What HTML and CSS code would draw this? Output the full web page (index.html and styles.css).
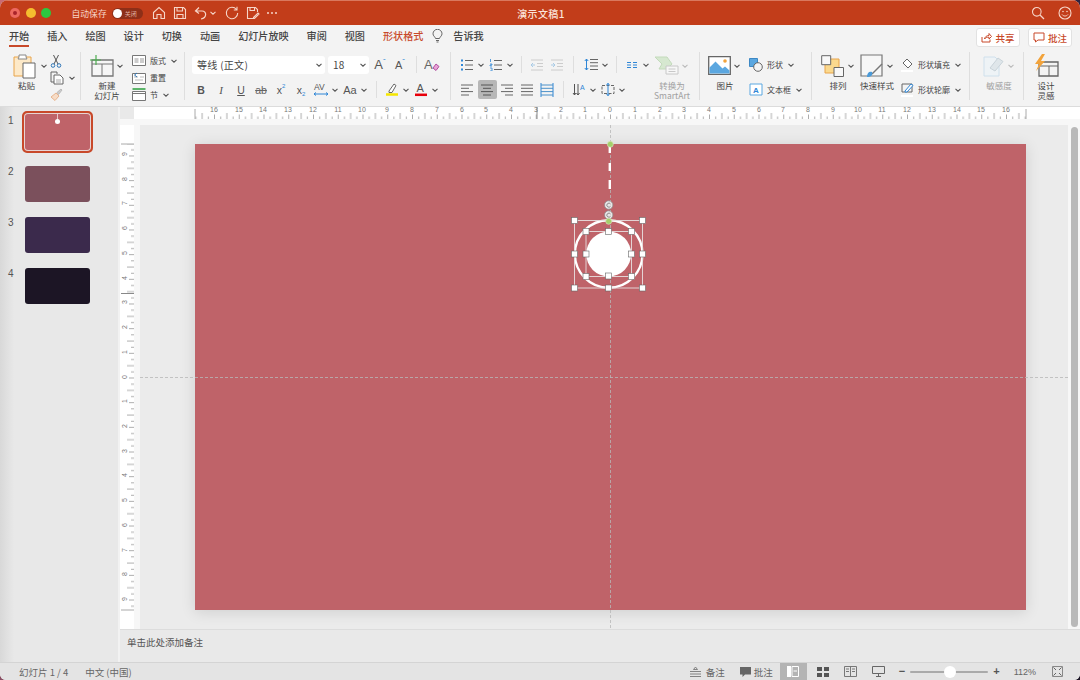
FILE: index.html
```html
<!DOCTYPE html>
<html lang="zh-CN">
<head>
    <meta charset="UTF-8">
    <title>演示文稿1</title>
    <link rel="stylesheet" href="styles.css">
</head>
<body>
<svg class="defs" width="0" height="0">
    <symbol id="chev" viewBox="0 0 8 8"><path d="M1.5 2.8 4 5.2 6.5 2.8" fill="none" stroke="#555" stroke-width="1.1"/></symbol>
    <symbol id="chevg" viewBox="0 0 8 8"><path d="M1.5 2.8 4 5.2 6.5 2.8" fill="none" stroke="#bbb" stroke-width="1.1"/></symbol>
</svg>
<div class="window">
    <!-- 타이틀바 -->
    <div class="titlebar">
        <div class="tb_left">
            <span class="light red"></span><span class="light yellow"></span><span class="light green"></span>
            <span class="autosave">自动保存</span>
            <span class="toggle"><i></i><em>关闭</em></span>
            <svg class="qa" width="14" height="14" viewBox="0 0 14 14"><path d="M1.5 6.5 7 1.5l5.500 5v6H9V8.500H5v4H1.500z" fill="none" stroke="#f6d5c8" stroke-width="1.100"/></svg>
            <svg class="qa" width="14" height="14" viewBox="0 0 14 14"><path d="M1.500 1.500h9l2 2v9h-11zM4 1.500v3.500h5.500V1.500M4 12.500V8.500h6v4" fill="none" stroke="#f6d5c8" stroke-width="1.100"/></svg>
            <svg class="qa undo" width="14" height="14" viewBox="0 0 14 14"><path d="M5 1.500 1.500 5 5 7.500M1.500 5H8c5 0 5 7-1 8" fill="none" stroke="#f6d5c8" stroke-width="1.200"/></svg>
            <svg class="qa_c" width="8" height="8" viewBox="0 0 8 8"><path d="M1.500 2.800 4 5.200 6.500 2.800" fill="none" stroke="#f6d5c8" stroke-width="1.100"/></svg>
            <svg class="qa" width="14" height="14" viewBox="0 0 14 14"><path d="M11.500 3.500A5.700 5.700 0 1 0 12.700 7M12 .8v3.200H8.800" fill="none" stroke="#f6d5c8" stroke-width="1.100"/></svg>
            <svg class="qa" width="14" height="14" viewBox="0 0 14 14"><path d="M8 12.500H1.500v-11h8l2 2V6M4 1.500v3h4.500v-3M7.500 11.500 12 7l1 1-4.500 4.500H7.500z" fill="none" stroke="#f6d5c8" stroke-width="1.100"/></svg>
            <span class="dots"><i></i><i></i><i></i></span>
        </div>
        <div class="doc_title">演示文稿1</div>
        <div class="tb_right">
            <svg width="14" height="14" viewBox="0 0 14 14"><circle cx="5.800" cy="5.800" r="4.300" fill="none" stroke="#f6d5c8" stroke-width="1.100"/><path d="M9 9l4 4" stroke="#f6d5c8" stroke-width="1.200"/></svg>
            <svg width="14" height="14" viewBox="0 0 14 14"><circle cx="7" cy="7" r="6" fill="none" stroke="#f6d5c8" stroke-width="1.100"/><circle cx="5" cy="5.500" r=".8" fill="#f6d5c8"/><circle cx="9" cy="5.500" r=".8" fill="#f6d5c8"/><path d="M4 8.500c1.500 2 4.500 2 6 0" fill="none" stroke="#f6d5c8"/></svg>
        </div>
    </div>

    <!-- 탭 -->
    <div class="tabs">
        <ul class="tablist">
            <li class="on">开始</li><li>插入</li><li>绘图</li><li>设计</li><li>切换</li><li>动画</li><li>幻灯片放映</li><li>审阅</li><li>视图</li><li class="shape">形状格式</li>
            <li class="tell">
                <svg width="11" height="14" viewBox="0 0 11 14"><path d="M3.500 9.500C3 7.500 1 7 1 4.800a4.500 4.500 0 0 1 9 0C10 7 8 7.500 7.500 9.500zM4 11.500h3M4.500 13h2" fill="none" stroke="#666"/></svg>
                告诉我
            </li>
        </ul>
        <div class="tab_btns">
            <a class="tbtn"><svg width="11" height="11" viewBox="0 0 11 11"><path d="M1 5v5h8V7.500M3.500 7c.5-2.500 2.500-3.500 4.500-3.500V1.500L10.500 4.500 8 7V5.200C6 5.200 4.500 5.500 3.500 7z" fill="none" stroke="#c8492a"/></svg>共享</a>
            <a class="tbtn"><svg width="12" height="11" viewBox="0 0 12 11"><path d="M1 1h10v7H5L2.500 10V8H1z" fill="none" stroke="#c8492a"/></svg>批注</a>
        </div>
    </div>

    <!-- 리본 -->
    <div class="ribbon">
        <div class="group g1">
            <div class="big w31">
                <div class="big_top">
                    <svg width="25" height="26" viewBox="0 0 25 26"><path d="M1 4h17v19H1z" fill="#fde9c8" stroke="#e8a44a"/><path d="M6 4V2h7v2l1 2H5z" fill="#fff" stroke="#888"/><path d="M10 10h12v15H10z" fill="#fff" stroke="#666"/></svg>
                    <svg class="c" width="8" height="8"><use href="#chev"/></svg>
                </div>
                <span class="lb paste_lb">粘贴</span>
            </div>
            <div class="col3 ml1">
                <div class="line">
                    <svg width="12" height="14" viewBox="0 0 12 14"><path d="M3.500 1 8 10M8.500 1 4 10" stroke="#555" fill="none"/><circle cx="3" cy="11.500" r="1.800" fill="none" stroke="#2e75b6"/><circle cx="9" cy="11.500" r="1.800" fill="none" stroke="#2e75b6"/></svg>
                </div>
                <div class="line">
                    <svg width="14" height="14" viewBox="0 0 14 14"><path d="M1 1h6v2M1 1v10h3" fill="none" stroke="#666"/><path d="M4 4h6l3 3v6H4z" fill="#fff" stroke="#666"/><path d="M6 9h5M6 11h5" stroke="#aaa"/></svg>
                    <svg class="c" width="8" height="8"><use href="#chev"/></svg>
                </div>
                <div class="line">
                    <svg width="13" height="13" viewBox="0 0 13 13"><path d="M1 9 6 5l3 3-4 4.500z" fill="#f7dcc6" stroke="#e6b48f"/><path d="M7 4.500 11 1l1 1-3.500 4.500z" fill="#ccc" stroke="#bbb"/></svg>
                </div>
            </div>
        </div>

        <div class="group g2">
            <div class="big w42">
                <div class="big_top">
                    <svg width="24" height="22" viewBox="0 0 24 22"><path d="M2 5h21v16H2z" fill="#f6f6f6" stroke="#777" stroke-width="1.300"/><path d="M2 9h21M12 9v12" stroke="#777"/><path d="M6 0v10M0 5h11" stroke="#4caf50" stroke-width="1.200"/></svg>
                    <svg class="c" width="8" height="8"><use href="#chev"/></svg>
                </div>
                <span class="lb">新建</span><span class="lb">幻灯片</span>
            </div>
            <div class="col3 ml3">
                <div class="line"><svg width="14" height="11" viewBox="0 0 14 11"><path d="M.5.500h13v10H.5z" fill="#fff" stroke="#777"/><path d="M2.500 3h4v5h-4zM8 3h4v5H8z" fill="#ccc"/></svg><span class="t">版式</span><svg class="c" width="8" height="8"><use href="#chev"/></svg></div>
                <div class="line"><svg width="14" height="12" viewBox="0 0 14 12"><path d="M.5 1.500h13v10H.5z" fill="#fff" stroke="#777"/><path d="M2 5h4M8 5h4M3 8h8" stroke="#bbb"/><path d="M5 1 2.500 3 5 5" fill="none" stroke="#2e75b6"/></svg><span class="t">重置</span></div>
                <div class="line"><svg width="14" height="13" viewBox="0 0 14 13"><path d="M.5 3.500h13v9H.5z" fill="#fff" stroke="#777"/><path d="M.5 1h13" stroke="#5cb56a" stroke-width="2"/><path d="M.5 5.500h13" stroke="#777"/></svg><span class="t">节</span><svg class="c" width="8" height="8"><use href="#chev"/></svg></div>
            </div>
        </div>

        <div class="group g3">
            <div class="rows">
                <div class="row first">
                    <div class="select font"><span>等线 (正文)</span><svg width="8" height="8"><use href="#chev"/></svg></div>
                    <div class="select size"><span>18</span><svg width="8" height="8"><use href="#chev"/></svg></div>
                    <span class="tool a_big">A<sup>ˆ</sup></span>
                    <span class="tool a_small">A<sup>ˇ</sup></span>
                    <i class="sep"></i>
                    <span class="tool">
                        <svg width="16" height="14" viewBox="0 0 16 14"><text x="0" y="11" class="svg_a">A</text><path d="M9 10l3-4 3 2.500-3 4z" fill="#e7a3d6" stroke="#b04fa0"/></svg>
                    </span>
                </div>
                <div class="row">
                    <span class="tool fb">B</span>
                    <span class="tool fi">I</span>
                    <span class="tool fu">U</span>
                    <span class="tool fs">ab</span>
                    <span class="tool">x<sup class="sup_b">2</sup></span>
                    <span class="tool">x<sub class="sup_b">2</sub></span>
                    <span class="tool"><svg width="16" height="15" viewBox="0 0 16 15"><text x="1" y="8" class="svg_av">AV</text><path d="M1 12h14M3 10.500 1 12l2 1.500M13 10.500l2 1.500-2 1.500" fill="none" stroke="#2e86d6"/></svg></span><svg class="c" width="8" height="8"><use href="#chev"/></svg>
                    <span class="tool faa">Aa</span><svg class="c" width="8" height="8"><use href="#chev"/></svg>
                    <i class="sep s7"></i>
                    <span class="tool"><svg width="14" height="15" viewBox="0 0 14 15"><path d="M4 9 9 2l2 1.500-4 7H4z" fill="#fff" stroke="#666"/><path d="M1 12.500h12" stroke="#f5e600" stroke-width="2.500"/></svg></span><svg class="c" width="8" height="8"><use href="#chev"/></svg>
                    <span class="tool"><svg width="14" height="15" viewBox="0 0 14 15"><text x="2.500" y="10" class="svg_a2">A</text><path d="M1 12.800h12" stroke="#e8000b" stroke-width="2.500"/></svg></span><svg class="c" width="8" height="8"><use href="#chev"/></svg>
                </div>
            </div>
        </div>

        <div class="group g4">
            <div class="rows">
                <div class="row">
                    <span class="tool"><svg width="14" height="12" viewBox="0 0 14 12"><path d="M1 1.500h2M1 6h2M1 10.500h2" stroke="#2e86d6" stroke-width="2"/><path d="M5 1.500h8M5 6h8M5 10.500h8" stroke="#666"/></svg></span><svg class="c" width="8" height="8"><use href="#chev"/></svg>
                    <span class="tool"><svg width="14" height="12" viewBox="0 0 14 12"><path d="M1.500 0v3M1 5h2v1H1v1h2M1 9h2v3H1" stroke="#2e86d6" fill="none" stroke-width=".8"/><path d="M5 1.500h8M5 6h8M5 10.500h8" stroke="#666"/></svg></span><svg class="c" width="8" height="8"><use href="#chev"/></svg>
                    <i class="sep"></i>
                    <span class="tool"><svg width="14" height="12" viewBox="0 0 14 12"><path d="M1 1h12M7 4.500h6M7 7.500h6M1 11h12" stroke="#ccc"/><path d="M5 6H1M3 4 1 6l2 2" stroke="#a9cbe6" fill="none"/></svg></span>
                    <span class="tool"><svg width="14" height="12" viewBox="0 0 14 12"><path d="M1 1h12M7 4.500h6M7 7.500h6M1 11h12" stroke="#ccc"/><path d="M1 6h4M3 4l2 2-2 2" stroke="#a9cbe6" fill="none"/></svg></span>
                    <i class="sep"></i>
                    <span class="tool ml2"><svg width="14" height="13" viewBox="0 0 14 13"><path d="M2.500 1v11M.8 3l1.700-2 1.700 2M.8 10l1.700 2 1.700-2" stroke="#2e86d6" fill="none"/><path d="M6 1.500h8M6 4.700h8M6 8h8M6 11.500h8" stroke="#666"/></svg></span><svg class="c" width="8" height="8"><use href="#chev"/></svg>
                    <i class="sep"></i>
                    <span class="tool"><svg width="12" height="8" viewBox="0 0 12 8"><path d="M1 1.500h4M7 1.500h4M1 4h4M7 4h4M1 6.500h4M7 6.500h4" stroke="#2e86d6"/></svg></span><svg class="c" width="8" height="8"><use href="#chev"/></svg>
                </div>
                <div class="row">
                    <span class="tool"><svg width="14" height="12" viewBox="0 0 14 12"><path d="M1 1h12M1 4.300h8M1 7.600h12M1 11h8" stroke="#666"/></svg></span>
                    <span class="tool on"><svg width="14" height="12" viewBox="0 0 14 12"><path d="M1 1h12M3 4.300h8M1 7.600h12M3 11h8" stroke="#555"/></svg></span>
                    <span class="tool"><svg width="14" height="12" viewBox="0 0 14 12"><path d="M1 1h12M5 4.300h8M1 7.600h12M5 11h8" stroke="#666"/></svg></span>
                    <span class="tool"><svg width="14" height="12" viewBox="0 0 14 12"><path d="M1 1h12M1 4.300h12M1 7.600h12M1 11h12" stroke="#666"/></svg></span>
                    <span class="tool"><svg width="14" height="14" viewBox="0 0 14 14"><path d="M1 0v14M13 0v14" stroke="#2e86d6"/><path d="M1 2h12M1 5.300h12M1 8.600h12M1 12h12" stroke="#4a90c8"/></svg></span>
                    <i class="sep"></i>
                    <span class="tool"><svg width="14" height="14" viewBox="0 0 14 14"><path d="M2.500 1v11M1 10l1.500 2L4 10M6 1v11M4.500 10 6 12l1.500-2" stroke="#555" fill="none"/><text x="8" y="7" class="svg_ab">A</text></svg></span><svg class="c" width="8" height="8"><use href="#chev"/></svg>
                    <span class="tool"><svg width="14" height="13" viewBox="0 0 14 13"><path d="M1 2.500h12v8H1z" fill="none" stroke="#666" stroke-dasharray="3 1.500"/><path d="M7 0v13M5.500 2 7 .5 8.500 2M5.500 11 7 12.500 8.500 11" stroke="#2e86d6" fill="none"/></svg></span><svg class="c" width="8" height="8"><use href="#chev"/></svg>
                </div>
            </div>
            <div class="big smart">
                <div class="big_top">
                    <svg width="25" height="19" viewBox="0 0 25 19"><path d="M1 1h12l5 7-5 5H5l3-5z" fill="#d6e8d0" stroke="#c3dabb"/><path d="M12 10h12v8H12z" fill="#f7f7f7" stroke="#c8c8c8"/><path d="M14.500 13h7M14.500 15.500h7" stroke="#c8c8c8"/></svg>
                    <svg class="c" width="8" height="8"><use href="#chevg"/></svg>
                </div>
                <span class="lb gray">转换为</span><span class="lb gray">SmartArt</span>
            </div>
        </div>

        <div class="group g5">
            <div class="big w40">
                <div class="big_top">
                    <svg width="23" height="19" viewBox="0 0 23 19"><path d="M.7.700h21.600v17.600H.7z" fill="#fff" stroke="#666" stroke-width="1.300"/><path d="M1.500 17.500v-6l6-6 7 7 2.500-2 4.500 4v3z" fill="#5ba7e0"/><circle cx="17" cy="5" r="1.800" fill="#f2a33b"/></svg>
                    <svg class="c" width="8" height="8"><use href="#chev"/></svg>
                </div>
                <span class="lb">图片</span>
            </div>
            <div class="rows ml4">
                <div class="row">
                    <svg width="14" height="14" viewBox="0 0 14 14"><path d="M.5.500h8v8h-8z" fill="#5ba7e0" stroke="#3d88c4"/><circle cx="9" cy="9" r="4.300" fill="#f4f4f4" stroke="#666"/></svg>
                    <span class="t">形状</span><svg class="c" width="8" height="8"><use href="#chev"/></svg>
                </div>
                <div class="row">
                    <svg width="14" height="13" viewBox="0 0 14 13"><path d="M1 1h12v11H1z" fill="#fff" stroke="#5ba7e0"/><text x="4" y="10" class="svg_tb">A</text></svg>
                    <span class="t">文本框</span><svg class="c" width="8" height="8"><use href="#chev"/></svg>
                </div>
            </div>
        </div>

        <div class="group g6">
            <div class="big w40">
                <div class="big_top">
                    <svg width="24" height="22" viewBox="0 0 24 22"><path d="M4 4h14v14H4z" fill="#fbd98e" stroke="#e8a44a"/><path d="M.7.700h9v9h-9zM13 12.500h9.500v9H13z" fill="#f8f8f8" stroke="#666"/></svg>
                    <svg class="c" width="8" height="8"><use href="#chev"/></svg>
                </div>
                <span class="lb">排列</span>
            </div>
            <div class="big w38">
                <div class="big_top">
                    <svg width="24" height="24" viewBox="0 0 24 24"><path d="M1 1h21v21H1z" fill="#f6f6f6" stroke="#777" stroke-width="1.200"/><path d="M22 10 12 20" stroke="#777" stroke-width="1.500"/><path d="M7 23c0-4 2-6 5-5 1 3-1 5-5 5z" fill="#4a9ad8"/></svg>
                    <svg class="c" width="8" height="8"><use href="#chev"/></svg>
                </div>
                <span class="lb">快速样式</span>
            </div>
            <div class="rows ml5">
                <div class="row">
                    <svg width="13" height="15" viewBox="0 0 13 15"><path d="M6 2 11 7l-4 4-5-5z" fill="#fff" stroke="#666"/><path d="M0 14h12" stroke="#fff" stroke-width="2"/></svg>
                    <span class="t">形状填充</span><svg class="c" width="8" height="8"><use href="#chev"/></svg>
                </div>
                <div class="row">
                    <svg width="13" height="15" viewBox="0 0 13 15"><path d="M1 2h10v8H1z" fill="none" stroke="#666"/><path d="M4 9 10 2l2 1.500L6 10H4z" fill="#fff" stroke="#2e86d6"/><path d="M0 14h12" stroke="#fff" stroke-width="2"/></svg>
                    <span class="t">形状轮廓</span><svg class="c" width="8" height="8"><use href="#chev"/></svg>
                </div>
            </div>
        </div>

        <div class="group g7">
            <div class="big w40">
                <div class="big_top">
                    <svg width="22" height="23" viewBox="0 0 22 23"><path d="M1 3h11l4 4v15H1z" fill="#eef3f6" stroke="#cfe0ec"/><path d="M7 14 15 4l5 3.500L12 17z" fill="#dfe6ea" stroke="#c9d3d9"/></svg>
                    <svg class="c" width="8" height="8"><use href="#chevg"/></svg>
                </div>
                <span class="lb gray">敏感度</span>
            </div>
        </div>

        <div class="group g8">
            <div class="big w44">
                <div class="big_top">
                    <svg width="25" height="23" viewBox="0 0 25 23"><path d="M5 8h19v14H5z" fill="#f4f4f4" stroke="#666" stroke-width="1.300"/><path d="M5 12h19M15 12v10" stroke="#666"/><path d="M8 0 1 10h4l-3 7 9-10H7l4-7z" fill="#f2a33b"/></svg>
                </div>
                <span class="lb">设计</span><span class="lb">灵感</span>
            </div>
        </div>
    </div>

    <!-- 본문 -->
    <div class="main">
        <div class="sidebar">
            <div class="thumb_row"><span class="num">1</span><div class="thumb t1 on"><i class="dot"></i></div></div>
            <div class="thumb_row"><span class="num">2</span><div class="thumb t2"></div></div>
            <div class="thumb_row"><span class="num">3</span><div class="thumb t3"></div></div>
            <div class="thumb_row"><span class="num">4</span><div class="thumb t4"></div></div>
        </div>
        <div class="editor">
            <div class="hruler">
                <svg width="960" height="12" viewBox="0 0 960 12">
                    <defs>
                        <pattern id="ht" patternUnits="userSpaceOnUse" x="490" width="24.75" height="12">
                            <path d="M.5 7.500V12M6.700 9.500V12M12.900 6V12M19.100 9.500V12" stroke="#999" stroke-width=".8"/>
                        </pattern>
                    </defs>
                    <rect width="14" height="12" fill="#e9e9e9"/>
                    <rect x="75" y="0" width="831" height="12" fill="url(#ht)"/>
                    <path d="M75 2v10M906 2v10" stroke="#aaa"/>
                    <path d="M417 0v12" stroke="#888"/>
                    <g class="rnum">
                        <text x="94">16</text><text x="119">15</text><text x="143">14</text><text x="168">13</text><text x="193">12</text><text x="218">11</text><text x="242">10</text><text x="267">9</text><text x="292">8</text><text x="317">7</text><text x="342">6</text><text x="366">5</text><text x="391">4</text><text x="416">3</text><text x="441">2</text><text x="465">1</text><text x="490">0</text><text x="515">1</text><text x="540">2</text><text x="564">3</text><text x="589">4</text><text x="614">5</text><text x="639">6</text><text x="663">7</text><text x="688">8</text><text x="713">9</text><text x="738">10</text><text x="762">11</text><text x="787">12</text><text x="812">13</text><text x="837">14</text><text x="861">15</text><text x="886">16</text>
                    </g>
                </svg>
            </div>
            <div class="stage">
                <div class="vruler">
                    <svg width="14" height="505" viewBox="0 0 14 505">
                        <defs>
                            <pattern id="vt" patternUnits="userSpaceOnUse" y="252.500" width="14" height="24.67">
                                <path d="M9 .5h5M11 6.700h3M7 12.900h7M11 19.100h3" stroke="#999" stroke-width=".8"/>
                            </pattern>
                        </defs>
                        <rect x="1" y="19" width="13" height="466" fill="url(#vt)"/>
                        <path d="M1 19h13M1 485h13" stroke="#aaa"/>
                        <path d="M1 168.500h13" stroke="#888"/>
                        <g class="rnum">
                            <text transform="translate(2 29) rotate(-90)">9</text><text transform="translate(2 54) rotate(-90)">8</text><text transform="translate(2 78) rotate(-90)">7</text><text transform="translate(2 103) rotate(-90)">6</text><text transform="translate(2 128) rotate(-90)">5</text><text transform="translate(2 153) rotate(-90)">4</text><text transform="translate(2 177) rotate(-90)">3</text><text transform="translate(2 202) rotate(-90)">2</text><text transform="translate(2 227) rotate(-90)">1</text><text transform="translate(2 252) rotate(-90)">0</text><text transform="translate(2 276) rotate(-90)">1</text><text transform="translate(2 301) rotate(-90)">2</text><text transform="translate(2 326) rotate(-90)">3</text><text transform="translate(2 350) rotate(-90)">4</text><text transform="translate(2 375) rotate(-90)">5</text><text transform="translate(2 400) rotate(-90)">6</text><text transform="translate(2 425) rotate(-90)">7</text><text transform="translate(2 449) rotate(-90)">8</text><text transform="translate(2 474) rotate(-90)">9</text>
                        </g>
                    </svg>
                </div>
                <div class="canvas">
                    <div class="slide"></div>
                    <!-- 가이드선, 선택 핸들 (원점: 캔버스 왼쪽 위 140,125) -->
                    <svg class="overlay" width="928" height="505" viewBox="140 125 928 505">
                        <path d="M140 377.500h928M610.500 125v505" stroke="#b8b8b8" stroke-width=".8" stroke-dasharray="3 2" fill="none"/>
                        <circle cx="608.700" cy="254" r="33.800" fill="none" stroke="#fff" stroke-width="2.400"/>
                        <circle cx="608.700" cy="254" r="22.500" fill="#fff"/>
                        <path d="M609.800 146.500V153M609.800 163v8M609.800 180v9" stroke="#fff" stroke-width="2.400"/>
                        <path d="M574.500 220.500h68v67.500h-68zM586 231.500h45.500V276.500H586z" fill="none" stroke="#e8e0e0" stroke-width=".9"/>
                        <g class="hd">
                            <rect x="571.500" y="217.500" width="6" height="6"/><rect x="639.500" y="217.500" width="6" height="6"/><rect x="571.500" y="251" width="6" height="6"/><rect x="639.500" y="251" width="6" height="6"/><rect x="571.500" y="285" width="6" height="6"/><rect x="605.500" y="285" width="6" height="6"/><rect x="639.500" y="285" width="6" height="6"/>
                            <rect x="583" y="228.500" width="6" height="6"/><rect x="605.500" y="228.500" width="6" height="6"/><rect x="628.500" y="228.500" width="6" height="6"/><rect x="583" y="251" width="6" height="6"/><rect x="628.500" y="251" width="6" height="6"/><rect x="583" y="273.500" width="6" height="6"/><rect x="605.500" y="273" width="6" height="6"/><rect x="628.500" y="273.500" width="6" height="6"/>
                        </g>
                        <g class="rot">
                            <circle cx="608.700" cy="205" r="4.200"/><circle cx="608.700" cy="215" r="4.200"/>
                            <path d="M610.500 204a2 2 0 1 0 0 2.300M610.500 214a2 2 0 1 0 0 2.300"/>
                        </g>
                        <circle cx="608.700" cy="221.300" r="3" fill="#a4cf6a" stroke="#dfe9c9" stroke-width=".6"/>
                        <circle cx="610.300" cy="144.300" r="3" fill="#a4cf6a" stroke="#dfe9c9" stroke-width=".6"/>
                    </svg>
                </div>
                <div class="scroll"><i></i></div>
            </div>
            <div class="notes">单击此处添加备注</div>
        </div>
    </div>

    <!-- 상태바 -->
    <div class="status">
        <div class="st_left"><span>幻灯片 1 / 4</span><span>中文 (中国)</span></div>
        <div class="st_right">
            <span class="st_item"><svg width="11" height="10" viewBox="0 0 11 10"><path d="M5.500 0 3.500 2.500h4zM0 4.500h11M0 7h11M0 9.500h11" stroke="#777" fill="none" stroke-width=".9"/></svg>备注</span>
            <span class="st_item pl"><svg width="11" height="10" viewBox="0 0 11 10"><path d="M0 0h11v7.500H5L2.500 10V7.500H0z" fill="#666"/></svg>批注</span>
            <span class="view_on"><svg width="12" height="11" viewBox="0 0 12 11"><path d="M0 0h4v11H0z" fill="#fff"/><path d="M5 .5h6.500v10H5z" fill="none" stroke="#fff"/><path d="M6.500 5h3.500" stroke="#fff"/></svg></span>
            <span class="v_ic"><svg width="12" height="10" viewBox="0 0 12 10"><path d="M0 0h5v4H0zM7 0h5v4H7zM0 6h5v4H0zM7 6h5v4H7z" fill="#555"/></svg></span>
            <span class="v_ic"><svg width="13" height="11" viewBox="0 0 13 11"><path d="M.5.500h12v10H.5zM6.500.5v10M2 3h3M2 5.500h3M8 3h3M8 5.500h3" fill="none" stroke="#777"/></svg></span>
            <span class="v_ic"><svg width="13" height="11" viewBox="0 0 13 11"><path d="M.5.500h12v7H.5zM6.500 7.500V10M4 10.500h5" fill="none" stroke="#666"/></svg></span>
            <div class="zoom">
                <b>−</b>
                <div class="track"><i></i></div>
                <b>+</b>
            </div>
            <span class="pct">112%</span>
            <span class="fit"><svg width="11" height="11" viewBox="0 0 11 11"><path d="M.5.500h10v10H.5z" fill="none" stroke="#888"/><path d="M1.500 1.500l2.500 2.500M9.500 1.500 7 4M1.500 9.500 4 7M9.500 9.500 7 7" stroke="#666"/></svg></span>
        </div>
    </div>
</div>
</body>
</html>
```

FILE: styles.css
```css
* {margin: 0; padding: 0; box-sizing: border-box;}
ul,li {list-style: none;}
i,em {font-style: normal;}
html,body {height: 100%;}
body {width: 1080px; height: 680px; overflow: hidden; background: linear-gradient(120deg, #c96b74 0%, #3a2a4d 60%, #1c1626 100%);
      font-family: "Noto Sans CJK SC", "Noto Sans", sans-serif; color: #444;}
.defs {position: absolute;}
svg {display: block; flex: none;}

.window {width: 1080px; height: 680px; display: flex; flex-direction: column; border-radius: 8px 8px 6px 6px; overflow: hidden; background: #f3f3f3;}

/* titlebar */
.titlebar {height: 25px; flex: none; display: flex; align-items: center; background: #c23d1a; border-top: 1px solid #d9785e;}
.tb_left,.tb_right {flex: 1; display: flex; align-items: center;}
.tb_left {padding-left: 10px;}
.light {width: 10px; height: 10px; border-radius: 50%; margin-right: 5.500px;}
.light.red {background: #ef5a52; box-shadow: inset 0 0 0 3px #ee6a5f, inset 0 0 0 5px #a8232a;}
.light.yellow {background: #f5bd2f;}
.light.green {background: #2bc840;}
.autosave {margin-left: 15px; font-size: 8.800px; color: #f6d5c8; white-space: nowrap;}
.toggle {width: 31px; height: 11px; margin: 0 9px 0 5px; border-radius: 6px; background: #8e2f18; display: flex; align-items: center; padding: 0 1px;}
.toggle i {width: 9px; height: 9px; border-radius: 50%; background: #fff;}
.toggle em {font-size: 6px; color: #e2b2a2; margin-left: 3px;}
.qa {margin-right: 7px;}
.undo {margin-right: 1px;}
.qa_c {margin-right: 8px;}
.dots {display: flex; gap: 2px;}
.dots i {width: 2px; height: 2px; border-radius: 50%; background: #f6d5c8;}
.doc_title {flex: none; font-size: 10px; font-weight: 500; color: #fbe4da; letter-spacing: .4px;}
.tb_right {justify-content: flex-end; gap: 13px; padding-right: 8px;}

/* tabs */
.tabs {height: 20px; flex: none; display: flex; justify-content: space-between; padding: 0 8px 0 9px;}
.tablist {display: flex; gap: 18px; height: 22px;}
.tablist li {font-size: 10.100px; font-weight: 500; line-height: 22px; color: #444; white-space: nowrap; position: relative;}
.tablist li.on::after {content: ""; position: absolute; left: 0; right: 0; bottom: 0; height: 2px; background: #c8492a;}
.tablist li.shape {color: #c8492a;}
.tablist .tell {display: flex; align-items: center; gap: 10px; margin-left: -9px;}
.tab_btns {display: flex; gap: 8px; padding-top: 3px;}
.tbtn {width: 44px; height: 19px; display: flex; align-items: center; justify-content: center; gap: 3px; background: #fff; border: 1px solid #e2e2e2; border-radius: 3px; font-size: 9.500px; font-weight: 500; color: #c8492a;}

/* ribbon */
.ribbon {height: 62px; flex: none; display: flex; padding-top: 7px; border-bottom: 1px solid #dcdcdc;}
.group {display: flex; height: 48px; border-right: 1px solid #dedede;}
.g1 {width: 81px; padding-left: 13px;}
.g2 {width: 104px; padding-left: 4px;}
.g3 {width: 266px; padding-left: 6px;}
.g4 {width: 249px; padding-left: 6px;}
.g5 {width: 112px; padding-left: 5px;}
.g6 {width: 158px; padding-left: 6px;}
.g7 {width: 54px; padding-left: 9px;}
.g8 {border-right: 0; padding-left: 0;}

.big {display: flex; flex-direction: column; align-items: center;}
.big_top {height: 31px; flex: none; display: flex; align-items: center; gap: 2px; margin-top: -2px;}
.lb {font-size: 8.500px; line-height: 9.500px; color: #444; white-space: nowrap;}
.lb.gray {color: #a0a0a0;}
.paste_lb {margin-right: 9px;}
.w31 {width: 36px;}
.w38 {width: 38px;}
.w40 {width: 40px;}
.w42 {width: 44px;}
.w44 {width: 44px;}
.smart {width: 44px; margin-left: -1px;}
.col3 {display: flex; flex-direction: column;}
.line {height: 17px; flex: none; display: flex; align-items: center; gap: 4px;}
.t {font-size: 8px; color: #444; white-space: nowrap;}
.ml1 {margin-left: 1px;}
.ml2 {margin-left: 2px;}
.ml3 {margin-left: 3px;}
.ml4 {margin-left: 4px;}
.ml5 {margin-left: 5px;}
.c {margin-right: 1px;}

.rows {display: flex; flex-direction: column;}
.row {height: 25px; flex: none; display: flex; align-items: center; gap: 0;}
.g5 .row,.g6 .row {gap: 4px;}
.first {margin-left: 1px;}
.select {height: 18px; background: #fff; border-radius: 3px; display: flex; align-items: center; justify-content: space-between; padding: 0 2px 0 5px; font-size: 10px; letter-spacing: .3px; color: #444;}
.select.font {width: 133px; margin-right: 3px;}
.select.size {width: 41px; margin-right: 1px;}
.tool {width: 20px; height: 20px; display: flex; align-items: center; justify-content: center; font-size: 10.500px; color: #555; font-family: "Liberation Sans", sans-serif;}
.tool sup,.tool sub {font-size: 6px; line-height: 1;}
.tool sup {align-self: flex-start; margin-top: 3px;}
.tool sub {align-self: flex-end; margin-bottom: 3px;}
.sup_b {color: #2e86d6;}
.tool.on {width: 19px; height: 19px; background: #b7b7b7; border-radius: 2px; margin: 0 .5px;}
.a_big {font-size: 13px;}
.a_small {font-size: 11px;}
.a_big sup,.a_small sup {color: #2e86d6; font-size: 8px;}
.fb {font-weight: 700;}
.fi {font-style: italic; font-family: "Liberation Serif", serif; font-size: 11px;}
.fu {text-decoration: underline;}
.fs {text-decoration: line-through; color: #666;}
.faa {font-size: 11px;}
.sep {display: block; width: 1px; height: 17px; background: #dedede; margin: 0 5px 0 6px;}
.sep.s7 {margin-left: 7px;}
.svg_a {font: 13px "Liberation Sans", sans-serif; fill: #666;}
.svg_a2 {font: 11px "Liberation Sans", sans-serif; fill: #555;}
.svg_ab {font: 7px "Liberation Sans", sans-serif; fill: #2e86d6;}
.svg_tb {font: bold 8px "Liberation Sans", sans-serif; fill: #2e86d6;}
.svg_av {font: 8.500px "Liberation Sans", sans-serif; fill: #555;}

/* main */
.main {flex: 1; min-height: 0; display: flex;}
.sidebar {width: 120px; flex: none; padding-top: 5px; background: linear-gradient(90deg, #d8d8d8 0, #e8e8e8 14px); border-right: 2px solid #f2f2f2; display: flex; flex-direction: column; gap: 9px;}
.thumb_row {height: 42px; flex: none; display: flex; align-items: flex-start;}
.num {width: 22px; padding: 3px 0 0 8px; font-size: 10px; color: #555; font-family: "Liberation Sans", sans-serif;}
.thumb {width: 71px; height: 42px; position: relative; border: 3px solid transparent; border-radius: 5px;}
.thumb::before {content: ""; position: absolute; inset: 0; border-radius: 3px;}
.t1::before {background: #bf6369;}
.t2::before {background: #7b505c;}
.t3::before {background: #3b2a4c;}
.t4::before {background: #1c1525;}
.t1 {margin-top: -1px;}
.thumb.on {border-color: #c8492a;}
.thumb.on::before {box-shadow: 0 0 0 1px #e7d4d4;}
.dot {position: absolute; left: 30px; top: 5px; width: 5px; height: 5px; border-radius: 50%; background: #fff;}
.dot::before {content: ""; position: absolute; left: 2px; top: -5px; width: 1px; height: 5px; background: #e9c5c7;}

.editor {flex: 1; min-width: 0; display: flex; flex-direction: column; background: #ebebeb;}
.hruler {height: 18px; flex: none; background: #f7f7f7;}
.hruler svg {background: #fff;}
.stage {flex: 1; min-height: 0; display: flex; background: #f7f7f7;}
.vruler {width: 20px; flex: none;}
.vruler svg {background: #fff;}
.rnum text {font: 7px "Liberation Sans", sans-serif; fill: #777; text-anchor: middle; dominant-baseline: hanging;}
.canvas {width: 928px; position: relative; padding: 19px 0 0 55px; background: #ebebeb;}
.slide {width: 831px; height: 466px; background: #bf6369; box-shadow: 0 2px 14px rgba(0,0,0,.12);}
.overlay {position: absolute; left: 0; top: 0;}
.hd rect {fill: #fff; stroke: #666; stroke-width: .6;}
.rot circle {fill: #e9e6e6; stroke: #888; stroke-width: .7;}
.rot path {fill: none; stroke: #666; stroke-width: .7;}
.scroll {flex: 1; padding: 2px 2px 2px 3px;}
.scroll i {display: block; height: 100%; border-radius: 4px; background: #b9b9b9;}
.notes {height: 33px; flex: none; padding: 5px 0 0 7px; border-top: 1px solid #dcdcdc; font-size: 9.500px; color: #555; background: #e9e9e9;}

/* status */
.status {height: 18px; flex: none; display: flex; justify-content: space-between; border-top: 1px solid #d4d4d4; background: #e4e4e4; font-size: 9.500px; color: #666;}
.st_left {display: flex; gap: 17px; padding-left: 19px; align-items: center;}
.st_right {display: flex; align-items: center; height: 100%;}
.st_item {display: flex; align-items: center; gap: 5px;}
.st_item.pl {margin: 0 7px 0 15px; gap: 3px;}
.view_on {width: 27px; height: 100%; margin-right: 2px; background: #b4b4b4; display: flex; align-items: center; justify-content: center;}
.v_ic {width: 28px; display: flex; justify-content: center;}
.zoom {display: flex; align-items: center; gap: 5px; margin-left: 6px;}
.zoom b {font-size: 11px; font-weight: 700; color: #555; font-family: "Liberation Sans", sans-serif; line-height: 1;}
.track {width: 78px; height: 2px; background: #aaa; position: relative; border-radius: 1px;}
.track i {position: absolute; left: 34px; top: -5px; width: 12px; height: 12px; border-radius: 50%; background: #fff;}
.pct {margin: 0 16px 0 14px; font-size: 9px; font-family: "Liberation Sans", sans-serif;}
.fit {margin-right: 17px;}
```
